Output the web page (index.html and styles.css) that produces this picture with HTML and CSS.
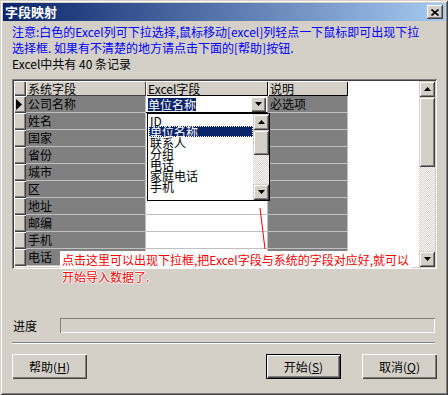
FILE: index.html
```html
<!DOCTYPE html>
<html lang="zh-CN">
<head>
    <meta charset="UTF-8">
    <title>字段映射</title>
    <link rel="stylesheet" href="styles.css">
</head>
<body>
    <div class="window">
        <div class="titlebar">
            <span class="title">字段映射</span>
            <button class="close-btn">
                <svg width="8" height="7" viewBox="0 0 8 7"><path d="M0.5 0.5 L7.5 6.5 M7.5 0.5 L0.5 6.5" stroke="#000" stroke-width="1.6"/></svg>
            </button>
        </div>
        <div class="content">
            <div class="note">
                <div class="note-line">注意:白色的Excel列可下拉选择,鼠标移动[excel]列轻点一下鼠标即可出现下拉</div>
                <div class="note-line">选择框. 如果有不清楚的地方请点击下面的[帮助]按钮.</div>
            </div>
            <div class="count">Excel中共有 40 条记录</div>

            <div class="grid-box">
                <div class="grid" id="grid">
                    <div class="sel"></div>
                    <div class="head">系统字段</div>
                    <div class="head head-dark">Excel字段</div>
                    <div class="head head-dark">说明</div>
                    <div class="blank"></div>
                </div>
                <div class="vscroll">
                    <div class="sbtn"><svg width="7" height="4" viewBox="0 0 7 4"><polygon points="3.5,0 7,4 0,4" fill="#000"/></svg></div>
                    <div class="thumb"></div>
                    <div class="track"></div>
                    <div class="sbtn"><svg width="7" height="4" viewBox="0 0 7 4"><polygon points="0,0 7,0 3.5,4" fill="#000"/></svg></div>
                </div>
            </div>

            <div class="progress-row">
                <span class="progress-label">进度</span>
                <div class="progress-box"></div>
            </div>
            <div class="separator"></div>
            <div class="buttons">
                <button class="btn">帮助(<u>H</u>)</button>
                <div class="btn-group">
                    <button class="btn btn-default">开始(<u>S</u>)</button>
                    <button class="btn">取消(<u>Q</u>)</button>
                </div>
            </div>
        </div>

        <!-- dropdown list of the combobox -->
        <div class="dropdown">
            <div class="dd-items">
                <div class="dd-item">ID</div>
                <div class="dd-item active">单位名称</div>
                <div class="dd-item">联系人</div>
                <div class="dd-item">分组</div>
                <div class="dd-item">电话</div>
                <div class="dd-item">家庭电话</div>
                <div class="dd-item">手机</div>
            </div>
            <div class="dd-scroll">
                <div class="sbtn"><svg width="7" height="4" viewBox="0 0 7 4"><polygon points="3.5,0 7,4 0,4" fill="#000"/></svg></div>
                <div class="dd-thumb"></div>
                <div class="track"></div>
                <div class="sbtn"><svg width="7" height="4" viewBox="0 0 7 4"><polygon points="0,0 7,0 3.5,4" fill="#000"/></svg></div>
            </div>
        </div>

        <svg class="pointer" width="10" height="46" viewBox="0 0 10 46"><line x1="2" y1="2" x2="7" y2="43" stroke="#f00" stroke-width="1"/></svg>

        <div class="hint">
            <div class="hint-line hint-first">点击这里可以出现下拉框,把Excel字段与系统的字段对应好,就可以</div>
            <div class="hint-line">开始导入数据了.</div>
        </div>
    </div>

    <script>
        const fields = [
            { name: '公司名称', excel: '单位名称', note: '必选项' },
            { name: '姓名' }, { name: '国家' }, { name: '省份' }, { name: '城市' },
            { name: '区' }, { name: '地址' }, { name: '邮编' }, { name: '手机' }, { name: '电话' }
        ];

        const grid = document.getElementById('grid');
        fields.forEach((f, i) => {
            const sel = document.createElement('div');
            sel.className = 'sel';
            if (i === 0) {
                sel.innerHTML = '<svg width="6" height="11" viewBox="0 0 6 11"><polygon points="0,0 6,5.5 0,11" fill="#000"/></svg>';
            }
            const name = document.createElement('div');
            name.className = 'cell gray';
            name.textContent = f.name;
            const excel = document.createElement('div');
            excel.className = 'cell white';
            if (f.excel) {
                excel.classList.add('combo');
                excel.innerHTML = `<span class="combo-text">${f.excel}</span>
                    <span class="combo-btn"><svg width="7" height="4" viewBox="0 0 7 4"><polygon points="0,0 7,0 3.5,4" fill="#000"/></svg></span>`;
            }
            const note = document.createElement('div');
            note.className = 'cell gray';
            note.textContent = f.note || '';
            const blank = document.createElement('div');
            blank.className = 'blank';
            grid.append(sel, name, excel, note, blank);
        });
    </script>
</body>
</html>
```

FILE: styles.css
```css
* {
    box-sizing: border-box;
}
body {
    margin: 0;
    font-family: "Noto Sans CJK SC", "Liberation Sans", sans-serif;
    font-size: 12px;
    background-color: #d4d0c8;
}
.window {
    position: relative;
    width: 448px;
    height: 395px;
    padding: 3px;
    background-color: #d4d0c8;
    box-shadow: inset 1px 1px #d4d0c8, inset -1px -1px #404040, inset 2px 2px #fff, inset -2px -2px #808080;
}
.titlebar {
    height: 18px;
    display: flex;
    align-items: center;
    justify-content: space-between;
    padding: 0 2px 0 2px;
    background: linear-gradient(to right, #0a246a, #a6caf0);
}
.title {
    color: #fff;
    font-weight: bold;
    font-size: 13px;
    line-height: 18px;
}
.close-btn {
    width: 16px;
    height: 14px;
    padding: 0;
    border: none;
    background-color: #d4d0c8;
    display: flex;
    align-items: center;
    justify-content: center;
    box-shadow: inset -1px -1px #404040, inset 1px 1px #fff, inset -2px -2px #808080;
}
.content {
    padding: 3px 8px 0 9px;
}
.note {
    color: #0000ff;
    line-height: 16px;
}
.note-line, .count, .hint-line {
    white-space: nowrap;
}
.count {
    line-height: 16px;
    color: #000;
}
.grid-box {
    margin-top: 7px;
    height: 190px;
    display: flex;
    padding: 2px;
    background-color: #fff;
    box-shadow: inset 1px 1px #808080, inset -1px -1px #fff, inset 2px 2px #404040, inset -2px -2px #d4d0c8;
}
.grid {
    flex: 1;
    display: grid;
    grid-template-columns: 12px 120px 122px 80px 1fr;
    grid-template-rows: 15px repeat(10, 17px);
    align-content: start;
}
.sel {
    background-color: #d4d0c8;
    box-shadow: inset 1px 1px #fff, inset -1px -1px #404040, inset -2px -2px #808080;
    display: flex;
    align-items: center;
    padding-left: 2px;
}
.head {
    background-color: #d4d0c8;
    line-height: 15px;
    padding-left: 2px;
    box-shadow: inset 1px 1px #fff, inset -1px -1px #404040;
}
.head-dark {
    box-shadow: inset 1px 1px #fff, inset -1px -1px #000;
}
.cell {
    line-height: 16px;
    padding-left: 2px;
    border-bottom: 1px solid #c0c0c0;
    border-right: 1px solid #c0c0c0;
    color: #000;
}
.gray {
    background-color: #808080;
}
.white {
    background-color: #fff;
}
.blank {
    background-color: #fff;
}
.combo {
    display: flex;
    align-items: center;
    justify-content: space-between;
    padding: 0 1px 0 2px;
    border-bottom: 1px solid #000;
}
.combo-text {
    background-color: #0a246a;
    color: #fff;
    line-height: 13px;
}
.combo-btn {
    width: 15px;
    height: 15px;
    background-color: #d4d0c8;
    display: flex;
    align-items: center;
    justify-content: center;
    box-shadow: inset 1px 1px #fff, inset -1px -1px #404040, inset -2px -2px #808080;
}
.vscroll, .dd-scroll {
    width: 16px;
    display: flex;
    flex-direction: column;
}
.sbtn {
    height: 16px;
    flex: none;
    background-color: #d4d0c8;
    display: flex;
    align-items: center;
    justify-content: center;
    box-shadow: inset 1px 1px #d4d0c8, inset -1px -1px #404040, inset 2px 2px #fff, inset -2px -2px #808080;
}
.thumb, .dd-thumb {
    flex: none;
    background-color: #d4d0c8;
    box-shadow: inset 1px 1px #d4d0c8, inset -1px -1px #404040, inset 2px 2px #fff, inset -2px -2px #808080;
}
.thumb {
    height: 70px;
}
.dd-thumb {
    height: 25px;
}
.track {
    flex: 1;
    background-color: #fff;
    background-image: conic-gradient(#d4d0c8 25%, #fff 0 50%, #d4d0c8 0 75%, #fff 0);
    background-size: 2px 2px;
}
.dropdown {
    position: absolute;
    left: 147px;
    top: 113px;
    width: 123px;
    height: 88px;
    display: flex;
    background-color: #fff;
    border: 1px solid #000;
}
.dd-items {
    flex: 1;
    padding: 1px 0 0 1px;
}
.dd-item {
    line-height: 11px;
    height: 11px;
    padding-left: 1px;
    white-space: nowrap;
}
.dd-item.active {
    background-color: #0a246a;
    color: #fff;
    outline: 1px dotted #fff;
    outline-offset: -1px;
}
.pointer {
    position: absolute;
    left: 258px;
    top: 206px;
}
.hint {
    position: absolute;
    left: 60px;
    top: 251px;
    color: #f00;
    line-height: 17px;
}
.hint-line {
    width: fit-content;
    padding: 0 2px;
    text-shadow: 1px 0 #fff, -1px 0 #fff, 0 1px #fff, 0 -1px #fff;
}
.hint-first {
    background-color: #fff;
}
.progress-row {
    margin-top: 49px;
    display: flex;
    align-items: center;
    height: 15px;
}
.progress-label {
    width: 48px;
    padding-left: 1px;
}
.progress-box {
    flex: 1;
    height: 15px;
    margin-right: 2px;
    box-shadow: inset 1px 1px #808080, inset -1px -1px #fff;
}
.separator {
    margin: 9px 2px 0 0;
    height: 2px;
    border-top: 1px solid #808080;
    border-bottom: 1px solid #fff;
}
.buttons {
    margin-top: 10px;
    display: flex;
    justify-content: space-between;
}
.btn-group {
    display: flex;
    gap: 21px;
}
.btn {
    width: 75px;
    height: 25px;
    padding: 0;
    border: none;
    font-family: "Noto Sans CJK SC", "Liberation Sans", sans-serif;
    font-size: 12px;
    color: #000;
    background-color: #d4d0c8;
    box-shadow: inset 1px 1px #fff, inset -1px -1px #404040, inset -2px -2px #808080;
}
.btn u {
    text-decoration: underline;
}
.btn-default {
    box-shadow: inset 0 0 0 1px #000, inset 2px 2px #fff, inset -2px -2px #404040, inset -3px -3px #808080;
}
```
